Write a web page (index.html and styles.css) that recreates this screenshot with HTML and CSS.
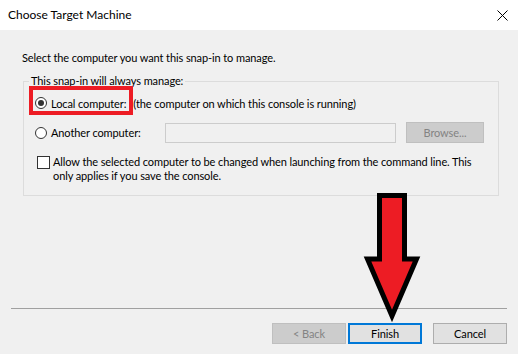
FILE: index.html
```html
<!DOCTYPE html>
<html>
<head>
  <title>Choose Target Machine</title>
  <link rel="stylesheet" href="styles.css">
</head>
<body>
  <div class="dialog">
    <div class="dialog-titlebar">
      <span class="dialog-title">Choose Target Machine</span>
      <svg class="dialog-close" width="11" height="11" viewBox="0 0 11 11">
        <path d="M0.5 0.5 L10.5 10.5 M10.5 0.5 L0.5 10.5" stroke="#000" stroke-width="1" fill="none"/>
      </svg>
    </div>

    <div class="dialog-content">
      <p class="dialog-intro">Select the computer you want this snap-in to manage.</p>
      <fieldset class="group">
        <legend class="group-legend">This snap-in will always manage:</legend>
        <div class="option-row">
          <label class="option-label">
            <span class="radio radio--checked"></span>
            <span>Local computer:</span>
          </label>
          <span class="option-note">(the computer on which this console is running)</span>
        </div>
        <div class="option-row option-row--remote">
          <label class="option-label option-label--fixed">
            <span class="radio"></span>
            <span>Another computer:</span>
          </label>
          <span class="text-input"></span>
          <span class="btn btn--disabled btn--browse">Browse...</span>
        </div>
        <div class="check-row">
          <span class="checkbox"></span>
          <span class="check-text">Allow the selected computer to be changed when launching from the command line. This<br>only applies if you save the console.</span>
        </div>
      </fieldset>
    </div>

    <div class="dialog-footer">
      <div class="separator"></div>
      <div class="buttons">
        <span class="btn btn--disabled">&lt; Back</span>
        <span class="btn btn--default">Finish</span>
        <span class="btn btn--cancel">Cancel</span>
      </div>
    </div>

    <!-- пометки поверх окна -->
    <div class="mark-box"></div>
    <svg class="mark-arrow" width="74" height="145" viewBox="0 0 74 145">
      <polygon points="24.5,10.5 49.5,10.5 49.5,74 61.5,74 37,131 12.5,74 24.5,74"
               fill="#ed1c24" stroke="#000" stroke-width="5" stroke-linejoin="miter"/>
    </svg>
  </div>
</body>
</html>
```

FILE: styles.css
```css
/* Окно диалога */
body {
    margin: 0;
    font-family: 'Lato', 'Liberation Sans', sans-serif;
    font-size: 11px;
    letter-spacing: -0.1px;
    color: #000;
}

.dialog {
    position: relative;
    width: 518px;
    height: 354px;
    background: #f0f0f0;
    display: flex;
    flex-direction: column;
    overflow: hidden;
}

.dialog-titlebar {
    height: 30px;
    background: #fff;
    display: flex;
    align-items: center;
    justify-content: space-between;
    padding: 0 10px 0 8px;
}

.dialog-title {
    font-size: 12px;
    letter-spacing: 0;
    line-height: 16px;
}

.dialog-close {
    display: block;
    margin-top: 1px;
}

.dialog-content {
    flex: 1;
    padding: 20px 19px 0 22px;
}

.dialog-intro {
    margin: 0 0 7px;
    line-height: 16px;
}

/* Группа */
.group {
    margin: 0 0 0 1px;
    padding: 4px 14px 12px 11px;
    border: 1px solid #dcdcdc;
    min-width: 0;
}

.group-legend {
    margin-left: -6px;
    padding: 0 2px;
    line-height: 16px;
}

.option-row {
    display: flex;
    align-items: center;
    height: 20px;
}

.option-row--remote {
    height: 21px;
    margin-top: 9px;
}

.option-label {
    display: flex;
    align-items: center;
    gap: 4px;
    margin-right: 7px;
}

.option-label--fixed {
    width: 130px;
    margin-right: 0;
}

.radio {
    width: 12px;
    height: 12px;
    border: 1px solid #333;
    border-radius: 50%;
    background: #fff;
    box-sizing: border-box;
    display: flex;
    align-items: center;
    justify-content: center;
}

.radio--checked::after {
    content: '';
    width: 6px;
    height: 6px;
    border-radius: 50%;
    background: #333;
}

.text-input {
    width: 231px;
    height: 20px;
    box-sizing: border-box;
    border: 1px solid #ccc;
    background: #f0f0f0;
    margin-right: 10px;
}

.check-row {
    display: flex;
    align-items: flex-start;
    gap: 3px;
    margin-top: 12px;
    margin-left: 2px;
}

.checkbox {
    width: 13px;
    height: 13px;
    border: 1px solid #333;
    background: #fff;
    box-sizing: border-box;
    margin-top: 1px;
    flex-shrink: 0;
}

.check-text {
    line-height: 14px;
    white-space: nowrap;
}

/* Кнопки */
.dialog-footer {
    padding: 0 11px 10px;
}

.separator {
    height: 1px;
    background: #a0a0a0;
}

.buttons {
    display: flex;
    justify-content: flex-end;
    gap: 2px;
    margin-top: 14px;
}

.btn {
    width: 74px;
    height: 21px;
    box-sizing: border-box;
    border: 1px solid #adadad;
    background: #e1e1e1;
    display: flex;
    align-items: center;
    justify-content: center;
}

.btn--disabled {
    background: #ccc;
    border-color: #bfbfbf;
    color: #838383;
}

.btn--browse {
    width: 78px;
    height: 21px;
}

.btn--default {
    border: 2px solid #0078d7;
}

.btn--cancel {
    margin-left: 9px;
}

/* Пометки */
.mark-box {
    position: absolute;
    left: 29px;
    top: 86px;
    width: 104px;
    height: 29px;
    box-sizing: border-box;
    border: 4px solid #ed1c24;
}

.mark-arrow {
    position: absolute;
    left: 355px;
    top: 185px;
}
```
